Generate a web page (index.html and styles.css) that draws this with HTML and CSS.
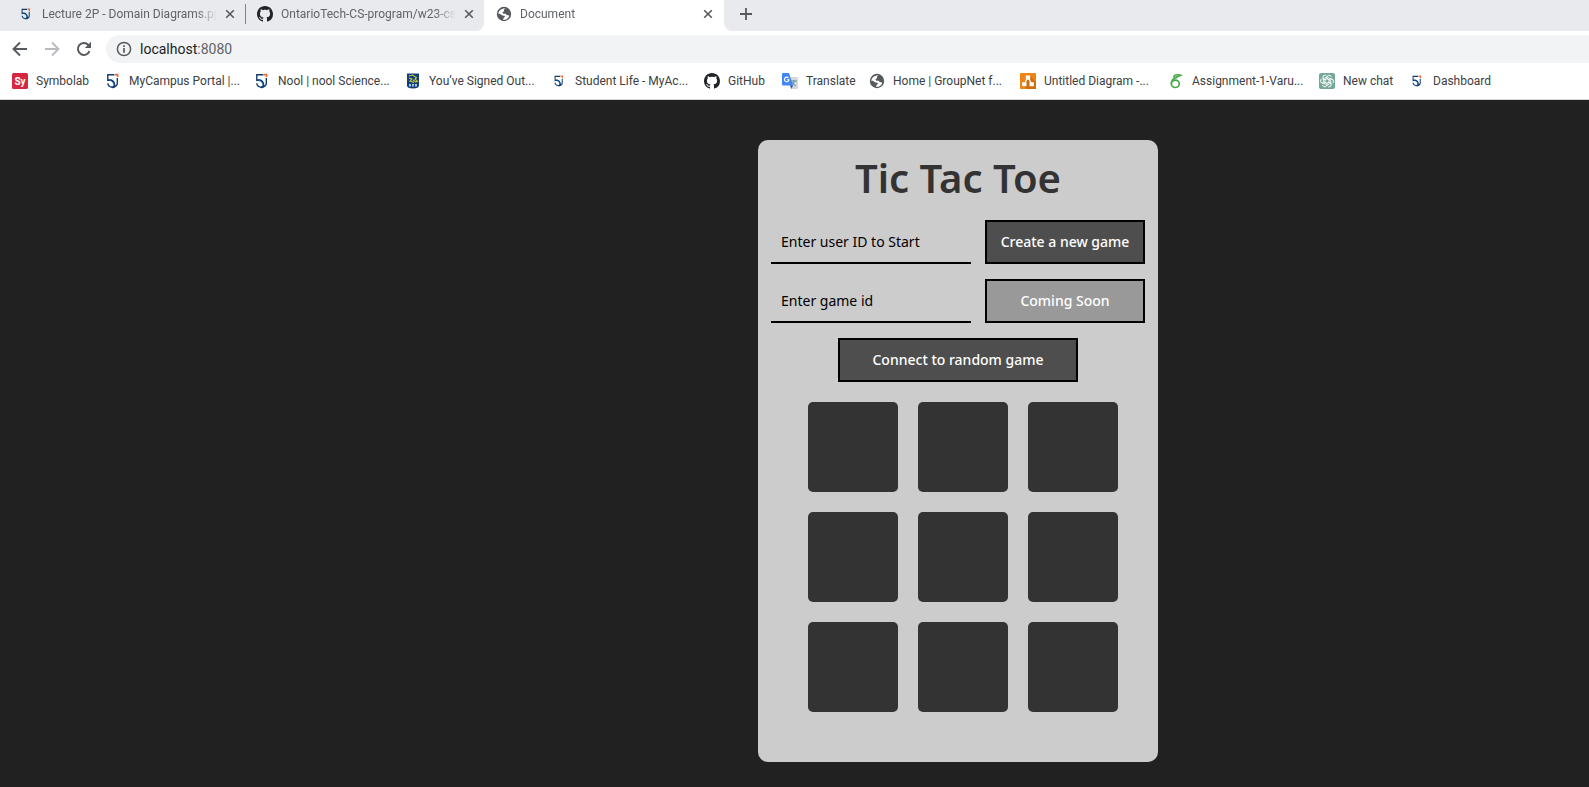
FILE: index.html
```html
<!DOCTYPE html>
<html lang="en">
<head>
<meta charset="utf-8">
<title>Document</title>
<link rel="stylesheet" href="styles.css">
</head>
<body>
<svg class="defs" aria-hidden="true">
  <symbol id="crest" viewBox="0 0 16 16">
    <path d="M3 7.300c3.500-.8 6 1.700 7 6" fill="none" stroke="#2a80c8" stroke-width="1.600"/>
    <path d="M9.500 1.800H2.800v5.500c4-1.500 6.500 1 6.700 3.700.2 2-.8 3-2.500 3.300-2-.3-4-1.500-4.200-4M12.300 5v5.500c0 2-1.800 3.300-4.800 4.300" fill="none" stroke="#143c72" stroke-width="1.400"/>
    <path d="M10 .8h3.400v3.200h-1.600V2.400H10z" fill="#ee6a35"/>
  </symbol>
  <symbol id="github" viewBox="0 0 16 16">
    <path fill="#202328" d="M8 0C3.580 0 0 3.580 0 8c0 3.540 2.290 6.530 5.470 7.590.4.070.55-.17.55-.38 0-.19-.01-.82-.01-1.490-2.010.37-2.530-.49-2.690-.94-.09-.23-.48-.94-.82-1.130-.28-.15-.68-.52-.01-.53.63-.01 1.080.58 1.230.82.72 1.210 1.870.87 2.330.66.07-.52.28-.87.51-1.070-1.780-.2-3.640-.89-3.640-3.950 0-.87.31-1.590.82-2.150-.08-.2-.36-1.020.08-2.120 0 0 .67-.21 2.200.82.64-.18 1.320-.27 2-.27s1.360.09 2 .27c1.530-1.040 2.200-.82 2.200-.82.44 1.100.16 1.920.08 2.120.51.56.82 1.270.82 2.150 0 3.070-1.870 3.750-3.650 3.950.29.25.54.73.54 1.480 0 1.070-.01 1.930-.01 2.200 0 .21.15.46.55.38A8.010 8.010 0 0 0 16 8c0-4.420-3.580-8-8-8z"/>
  </symbol>
  <symbol id="globe" viewBox="0 0 16 16">
    <circle cx="8" cy="8" r="7.200" fill="#56595d"/>
    <path d="M9.500 2.200 8 3.600v1.600L6.300 6.600l1.200 1.200h2.300l.8 1.200 2.700.5-.9 2.200-2.200 1.800-3 .4.300-1.800 1.300-1-.1-1.300-2.300-.3L3.700 7.700l-1.800-.4.500 2.800C1.500 6 4 2.500 9.500 2.200z" fill="#fff"/>
  </symbol>
  <symbol id="close" viewBox="0 0 10 10"><path d="M1.200 1.200 8.800 8.800M8.800 1.200 1.200 8.800" stroke="#56595d" stroke-width="1.600"/></symbol>
</svg>

<header class="browser">
  <nav class="tabs" aria-label="Tabs">
    <div class="tab">
      <svg class="icon small"><use href="#crest"/></svg>
      <span class="tab-title">Lecture 2P - Domain Diagrams.pp</span>
      <button class="plain" aria-label="Close tab"><svg class="x"><use href="#close"/></svg></button>
    </div>
    <div class="tab second">
      <svg class="icon"><use href="#github"/></svg>
      <span class="tab-title">OntarioTech-CS-program/w23-cs</span>
      <button class="plain" aria-label="Close tab"><svg class="x"><use href="#close"/></svg></button>
    </div>
    <div class="tab active">
      <svg class="icon"><use href="#globe"/></svg>
      <span class="tab-title">Document</span>
      <button class="plain" aria-label="Close tab"><svg class="x"><use href="#close"/></svg></button>
    </div>
    <div class="strip-end">
      <button class="plain" aria-label="New tab"><svg class="plus" viewBox="0 0 12 12"><path d="M6 0v12M0 6h12" stroke="#56595d" stroke-width="1.800"/></svg></button>
    </div>
  </nav>

  <div class="toolbar">
    <div class="nav-buttons">
      <button class="plain" aria-label="Back"><svg class="nav-icon" viewBox="0 0 16 16"><path d="M15 8H2M8 1.500 1.500 8 8 14.500" fill="none" stroke="#56595d" stroke-width="1.900"/></svg></button>
      <button class="plain" aria-label="Forward"><svg class="nav-icon" viewBox="0 0 16 16"><path d="M1 8h13M8 1.500 14.500 8 8 14.500" fill="none" stroke="#b9bbbe" stroke-width="1.900"/></svg></button>
      <button class="plain" aria-label="Reload"><svg class="nav-icon" viewBox="0 0 16 16"><path d="M13.500 10.200A6 6 0 1 1 12.300 3.800L13.800 5.400" fill="none" stroke="#56595d" stroke-width="1.900"/><path d="M15 .8v6.200H8.800z" fill="#56595d"/></svg></button>
    </div>
    <div class="omnibox">
      <svg class="info" viewBox="0 0 16 16"><circle cx="8" cy="8" r="6.600" fill="none" stroke="#56595d" stroke-width="1.500"/><path d="M8 7v4.700M8 4.200v1.700" stroke="#56595d" stroke-width="1.700"/></svg>
      <a class="url" href="#">localhost<span>:8080</span></a>
    </div>
  </div>

  <nav class="bookmarks" aria-label="Bookmarks">
    <a href="#"><svg class="icon" viewBox="0 0 16 16"><rect width="16" height="16" rx="1.500" fill="#d7263f"/><text class="sy" x="8" y="12" text-anchor="middle">Sy</text></svg>Symbolab</a>
    <a href="#"><svg class="icon"><use href="#crest"/></svg>MyCampus Portal |...</a>
    <a href="#"><svg class="icon"><use href="#crest"/></svg>Nool | nool Science...</a>
    <a href="#"><svg class="icon" viewBox="0 0 16 16"><path d="M2 .5h12v12c0 2-2 3-6 3s-6-1-6-3z" fill="#123f7c"/><path d="M4 3 7.500 2l4 2.500-1.500 1.500 2.500 2.500-2 .5L8 7M4 5l3 1-2 2 4 1.500" fill="none" stroke="#c8c83c" stroke-width="1.100"/><path d="M4 11h2v2.500H4zM7 11h2v2.500H7zM10 11h2v2.500h-2z" fill="#a9bfd8"/></svg>You’ve Signed Out...</a>
    <a href="#"><svg class="icon small"><use href="#crest"/></svg>Student Life - MyAc...</a>
    <a href="#"><svg class="icon"><use href="#github"/></svg>GitHub</a>
    <a href="#"><svg class="icon" viewBox="0 0 16 16"><path d="M6 4h9a1 1 0 0 1 1 1v10a1 1 0 0 1-1 1H9z" fill="#d5d9dd"/><path d="M9 8h6M12 7v1c0 3-1 4-3 5M10 9c1 2 2 3 4 4" stroke="#5d8fa5" fill="none"/><path d="M1 0h6l4 12.500H1a1 1 0 0 1-1-1V1a1 1 0 0 1 1-1z" fill="#4285f4"/><path d="m8 12.500h3L9.500 16z" fill="#2a5bd0"/><path d="M6.500 5A2.300 2.300 0 1 0 7 6.700H4.800" fill="none" stroke="#fff" stroke-width="1.100"/></svg>Translate</a>
    <a href="#"><svg class="icon"><use href="#globe"/></svg>Home | GroupNet f...</a>
    <a href="#"><svg class="icon" viewBox="0 0 16 16"><rect width="16" height="16" rx="1" fill="#ee8414"/><path d="m10 3 6 6v7H7l-4-4z" fill="#cf6c0b"/><path d="M8 4 4.500 11M8 4l3.500 7" stroke="#fff" stroke-width="1.300"/><path d="M5.800 2.500h4.400v4H5.800zM2.200 9.300h4.300v4H2.200zM9.500 9.300h4.300v4H9.500z" fill="#fff"/></svg>Untitled Diagram -...</a>
    <a href="#"><svg class="icon" viewBox="0 0 16 16"><ellipse cx="7.300" cy="10.800" rx="4" ry="3.700" fill="none" stroke="#45a846" stroke-width="1.700"/><path d="M3.300 11C3 7.500 6 4.500 12.800 2.300 10 1.200 6.500 1.600 5.800 3.500c.3 1.500 2.300 1.500 3.200 1" fill="none" stroke="#45a846" stroke-width="1.500"/></svg>Assignment-1-Varu...</a>
    <a href="#"><svg class="icon" viewBox="0 0 16 16"><rect width="16" height="16" rx="2" fill="#73a899"/><g fill="none" stroke="#fff" stroke-width=".9"><path id="petal" d="M8 5.700V3.900a2.300 2.300 0 0 1 4-.8l.7 1.100M8 5.700l3.700 2.100v3.500"/><use href="#petal" transform="rotate(60 8 8)"/><use href="#petal" transform="rotate(120 8 8)"/><use href="#petal" transform="rotate(180 8 8)"/><use href="#petal" transform="rotate(240 8 8)"/><use href="#petal" transform="rotate(300 8 8)"/></g></svg>New chat</a>
    <a href="#"><svg class="icon small"><use href="#crest"/></svg>Dashboard</a>
  </nav>
</header>

<main class="page">
  <section class="card">
    <h1>Tic Tac Toe</h1>
    <form class="controls">
      <input type="text" placeholder="Enter user ID to Start" aria-label="User ID">
      <button type="button" class="action">Create a new game</button>
      <input type="text" placeholder="Enter game id" aria-label="Game ID">
      <button type="button" class="action" disabled>Coming Soon</button>
      <button type="button" class="action random">Connect to random game</button>
    </form>
    <div class="board">
      <button class="cell" aria-label="Row 1, column 1"></button>
      <button class="cell" aria-label="Row 1, column 2"></button>
      <button class="cell" aria-label="Row 1, column 3"></button>
      <button class="cell" aria-label="Row 2, column 1"></button>
      <button class="cell" aria-label="Row 2, column 2"></button>
      <button class="cell" aria-label="Row 2, column 3"></button>
      <button class="cell" aria-label="Row 3, column 1"></button>
      <button class="cell" aria-label="Row 3, column 2"></button>
      <button class="cell" aria-label="Row 3, column 3"></button>
    </div>
  </section>
</main>
</body>
</html>
```
FILE: styles.css
```css
* { box-sizing: border-box; }

body {
  display: flex;
  flex-direction: column;
  min-height: 100vh;
  margin: 0;
  background: #212121;
  font-family: "Noto Sans", "Open Sans", sans-serif;
}

svg { display: block; flex: none; }
.defs { position: absolute; width: 0; height: 0; }

/* Browser chrome */
.browser {
  background: #fff;
  border-bottom: 1px solid #d5d6d8;
  color: #3c4043;
  font-family: Roboto, "Open Sans", sans-serif;
  font-size: 12px;
  overflow: hidden;
}

.plain {
  display: flex;
  padding: 0;
  border: 0;
  background: none;
}

.icon { width: 16px; height: 16px; }
.icon.small { padding: 2px; }
.x { width: 10px; height: 10px; }
.plus { width: 12px; height: 12px; }

.tabs {
  display: grid;
  grid-template-columns: 245px 239px 240px 1fr;
  height: 31px;
  background: #fff;
}

.tab {
  display: flex;
  align-items: center;
  gap: 8px;
  padding: 0 10px 4px 18px;
  background: #e8eaed;
  color: #5f6368;
}

.tab.second {
  padding: 0 10px 4px 12px;
  border-bottom-right-radius: 8px;
}

.tab.second::before {
  content: "";
  width: 1px;
  height: 20px;
  margin-left: -12px;
  margin-right: 3px;
  background: #808388;
}

.tab.active {
  padding: 0 11px 4px 12px;
  background: #fff;
}

.tab-title {
  flex: 1;
  min-width: 0;
  overflow: hidden;
  white-space: nowrap;
  mask-image: linear-gradient(to right, #000 88%, transparent);
}

.strip-end {
  display: flex;
  align-items: center;
  padding: 0 16px 4px;
  border-bottom-left-radius: 8px;
  background: #e8eaed;
}

.toolbar {
  display: flex;
  align-items: center;
  gap: 14px;
  padding: 4px 0 0 12px;
}

.nav-buttons { display: flex; gap: 16px; }

.nav-icon { width: 16px; height: 16px; }

.omnibox {
  display: flex;
  flex: 1;
  align-items: center;
  gap: 8px;
  height: 28px;
  padding-left: 10px;
  border-radius: 14px 0 0 14px;
  background: #f1f3f4;
}

.info { width: 16px; height: 16px; }

.url {
  color: #202124;
  font-size: 14px;
  text-decoration: none;
}

.url span { color: #5f6368; }

.bookmarks {
  display: grid;
  grid-template-columns: 93px 149px 151px 146px 153px 78px 87px 151px 148px 151px 90px 1fr;
  align-items: center;
  height: 36px;
  padding-left: 12px;
}

.bookmarks a {
  display: flex;
  align-items: center;
  gap: 8px;
  color: #3c4043;
  text-decoration: none;
  white-space: nowrap;
}

.sy { fill: #fff; font-size: 10px; font-weight: 700; }

/* Game */
.page {
  display: flex;
  flex: 1;
  justify-content: center;
  align-items: flex-start;
  padding: 40px 0 25px 327px;
}

.card {
  width: 400px;
  padding: 12px 13px 50px;
  border-radius: 10px;
  background: #ccc;
}

h1 {
  margin: 0 0 16px;
  color: #333;
  font-size: 40px;
  font-weight: 600;
  line-height: 52px;
  text-align: center;
}

.controls {
  display: grid;
  grid-template-columns: 200px 160px;
  justify-content: space-between;
  row-gap: 15px;
}

.controls input {
  width: 100%;
  height: 44px;
  padding: 0 10px;
  border: 0;
  border-bottom: 2px solid #000;
  background: none;
  font: 14px "Noto Sans", sans-serif;
}

.controls input::placeholder { color: #000; }

.action {
  height: 44px;
  padding: 0 0 2px;
  border: 2px solid #000;
  background: #4e4e4e;
  color: #fff;
  font: 500 14px "Noto Sans", sans-serif;
}

.action:disabled { background: #999; }

.random {
  grid-column: 1 / -1;
  justify-self: center;
  width: 240px;
}

.board {
  display: grid;
  grid-template-columns: repeat(3, 90px);
  grid-auto-rows: 90px;
  gap: 20px;
  padding: 20px 0 0 37px;
}

.cell {
  border: 0;
  border-radius: 5px;
  background: #333;
}
```
